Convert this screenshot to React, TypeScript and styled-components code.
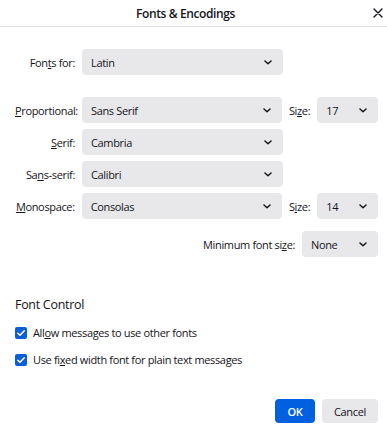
import React from 'react';
import styled, { createGlobalStyle } from 'styled-components';

const GlobalStyle = createGlobalStyle`
  html, body {
    margin: 0;
    padding: 0;
    background: #ffffff;
  }
  body {
    font-family: 'Open Sans', 'Noto Sans', sans-serif;
    font-size: 11px;
    letter-spacing: -0.35px;
    color: #15141a;
  }
`;

const Chevron = () => (
  <svg width="8" height="5" viewBox="0 0 8 5" fill="none">
    <path d="M1 1 L4 3.8 L7 1" stroke="#15141a" strokeWidth="1.5" strokeLinecap="round" strokeLinejoin="round" />
  </svg>
);

const Close = () => (
  <svg width="10" height="10" viewBox="0 0 10 10" fill="none">
    <path d="M1 1 L9 9 M9 1 L1 9" stroke="#15141a" strokeWidth="1.4" strokeLinecap="round" />
  </svg>
);

const Check = () => (
  <svg width="12" height="12" viewBox="0 0 12 12" fill="none">
    <path d="M2.8 6.2 L5 8.3 L9.3 3.8" stroke="#ffffff" strokeWidth="1.5" strokeLinecap="round" strokeLinejoin="round" />
  </svg>
);

type SelectSize = 'wide' | 'narrow' | 'medium';

const Select = ({ value, size = 'wide' }: { value: string; size?: SelectSize }) => (
  <$Select size={size}>
    <span>{value}</span>
    <Chevron />
  </$Select>
);

export default function App() {
  return (
    <$Dialog>
      <GlobalStyle />
      <$Header>
        <$Title>Fonts &amp; Encodings</$Title>
        <$CloseButton>
          <Close />
        </$CloseButton>
      </$Header>

      <$Body>
        <$Row>
          <$Label>
            Fon<u>t</u>s for:
          </$Label>
          <Select value="Latin" />
        </$Row>

        <$Rows>
          <$Row>
            <$Label>
              <u>P</u>roportional:
            </$Label>
            <Select value="Sans Serif" />
            <$SizeLabel>
              Si<u>z</u>e:
            </$SizeLabel>
            <Select value="17" size="narrow" />
          </$Row>
          <$Row>
            <$Label>
              <u>S</u>erif:
            </$Label>
            <Select value="Cambria" />
          </$Row>
          <$Row>
            <$Label>
              Sa<u>n</u>s-serif:
            </$Label>
            <Select value="Calibri" />
          </$Row>
          <$Row>
            <$Label>
              <u>M</u>onospace:
            </$Label>
            <Select value="Consolas" />
            <$SizeLabel>
              S<u>i</u>ze:
            </$SizeLabel>
            <Select value="14" size="narrow" />
          </$Row>
        </$Rows>

        <$MinRow>
          <$SizeLabel>
            Minimum font si<u>z</u>e:
          </$SizeLabel>
          <Select value="None" size="medium" />
        </$MinRow>

        <$Section>
          <$SectionTitle>Font Control</$SectionTitle>
          <$CheckRow>
            <$Checkbox>
              <Check />
            </$Checkbox>
            <span>
              All<u>o</u>w messages to use other fonts
            </span>
          </$CheckRow>
          <$CheckRow>
            <$Checkbox>
              <Check />
            </$Checkbox>
            <span>
              Use fi<u>x</u>ed width font for plain text messages
            </span>
          </$CheckRow>
        </$Section>

        <$Actions>
          <$Button primary>OK</$Button>
          <$Button>Cancel</$Button>
        </$Actions>
      </$Body>
    </$Dialog>
  );
}

const $Dialog = styled.div`
  width: 387px;
  height: 438px;
  display: flex;
  flex-direction: column;
  background: #ffffff;
`;

const $Header = styled.div`
  position: relative;
  height: 26px;
  padding-right: 16px;
  border-bottom: 1px solid #e3e3e8;
  display: flex;
  align-items: center;
  justify-content: center;
`;

const $Title = styled.div`
  font-size: 12px;
  font-weight: 600;
  letter-spacing: -0.4px;
`;

const $CloseButton = styled.div`
  position: absolute;
  right: 4px;
  top: 8px;
  display: flex;
`;

const $Body = styled.div`
  padding: 22px 9px 0 15px;
  display: flex;
  flex-direction: column;
`;

const $Rows = styled.div`
  display: flex;
  flex-direction: column;
  gap: 6px;
  margin-top: 22px;
`;

const $Row = styled.div`
  display: flex;
  align-items: center;
  height: 26px;
`;

const $Label = styled.label`
  width: 60px;
  margin-right: 7px;
  text-align: right;
  white-space: nowrap;
`;

const $SizeLabel = styled.label`
  margin: 0 7px;
  white-space: nowrap;
`;

const selectWidths: Record<SelectSize, number> = {
  wide: 201,
  narrow: 61,
  medium: 76,
};

const $Select = styled.div<{ size: SelectSize }>`
  width: ${({ size }) => selectWidths[size]}px;
  height: 26px;
  box-sizing: border-box;
  background: #e8e8eb;
  border-radius: 4px;
  padding: 0 11px 0 9px;
  display: flex;
  align-items: center;
  justify-content: space-between;
`;

const $MinRow = styled.div`
  display: flex;
  justify-content: flex-end;
  align-items: center;
  margin-top: 12px;
  height: 26px;
`;

const $Section = styled.div`
  margin-top: 39px;
  display: flex;
  flex-direction: column;
`;

const $SectionTitle = styled.div`
  font-size: 12.5px;
  font-weight: 500;
  letter-spacing: -0.3px;
  margin-bottom: 6px;
`;

const $CheckRow = styled.div`
  display: flex;
  align-items: center;
  gap: 6px;
  height: 27px;
`;

const $Checkbox = styled.div`
  width: 12px;
  height: 12px;
  border-radius: 2px;
  background: #0b5fd6;
  display: flex;
  align-items: center;
  justify-content: center;
`;

const $Actions = styled.div`
  display: flex;
  justify-content: flex-end;
  gap: 7px;
  margin-top: 26px;
`;

const $Button = styled.div<{ primary?: boolean }>`
  width: ${({ primary }) => (primary ? 40 : 56)}px;
  height: 24px;
  border-radius: 4px;
  display: flex;
  align-items: center;
  justify-content: center;
  font-weight: ${({ primary }) => (primary ? 600 : 400)};
  background: ${({ primary }) => (primary ? '#0061e0' : '#e8e8eb')};
  color: ${({ primary }) => (primary ? '#ffffff' : '#15141a')};
`;
